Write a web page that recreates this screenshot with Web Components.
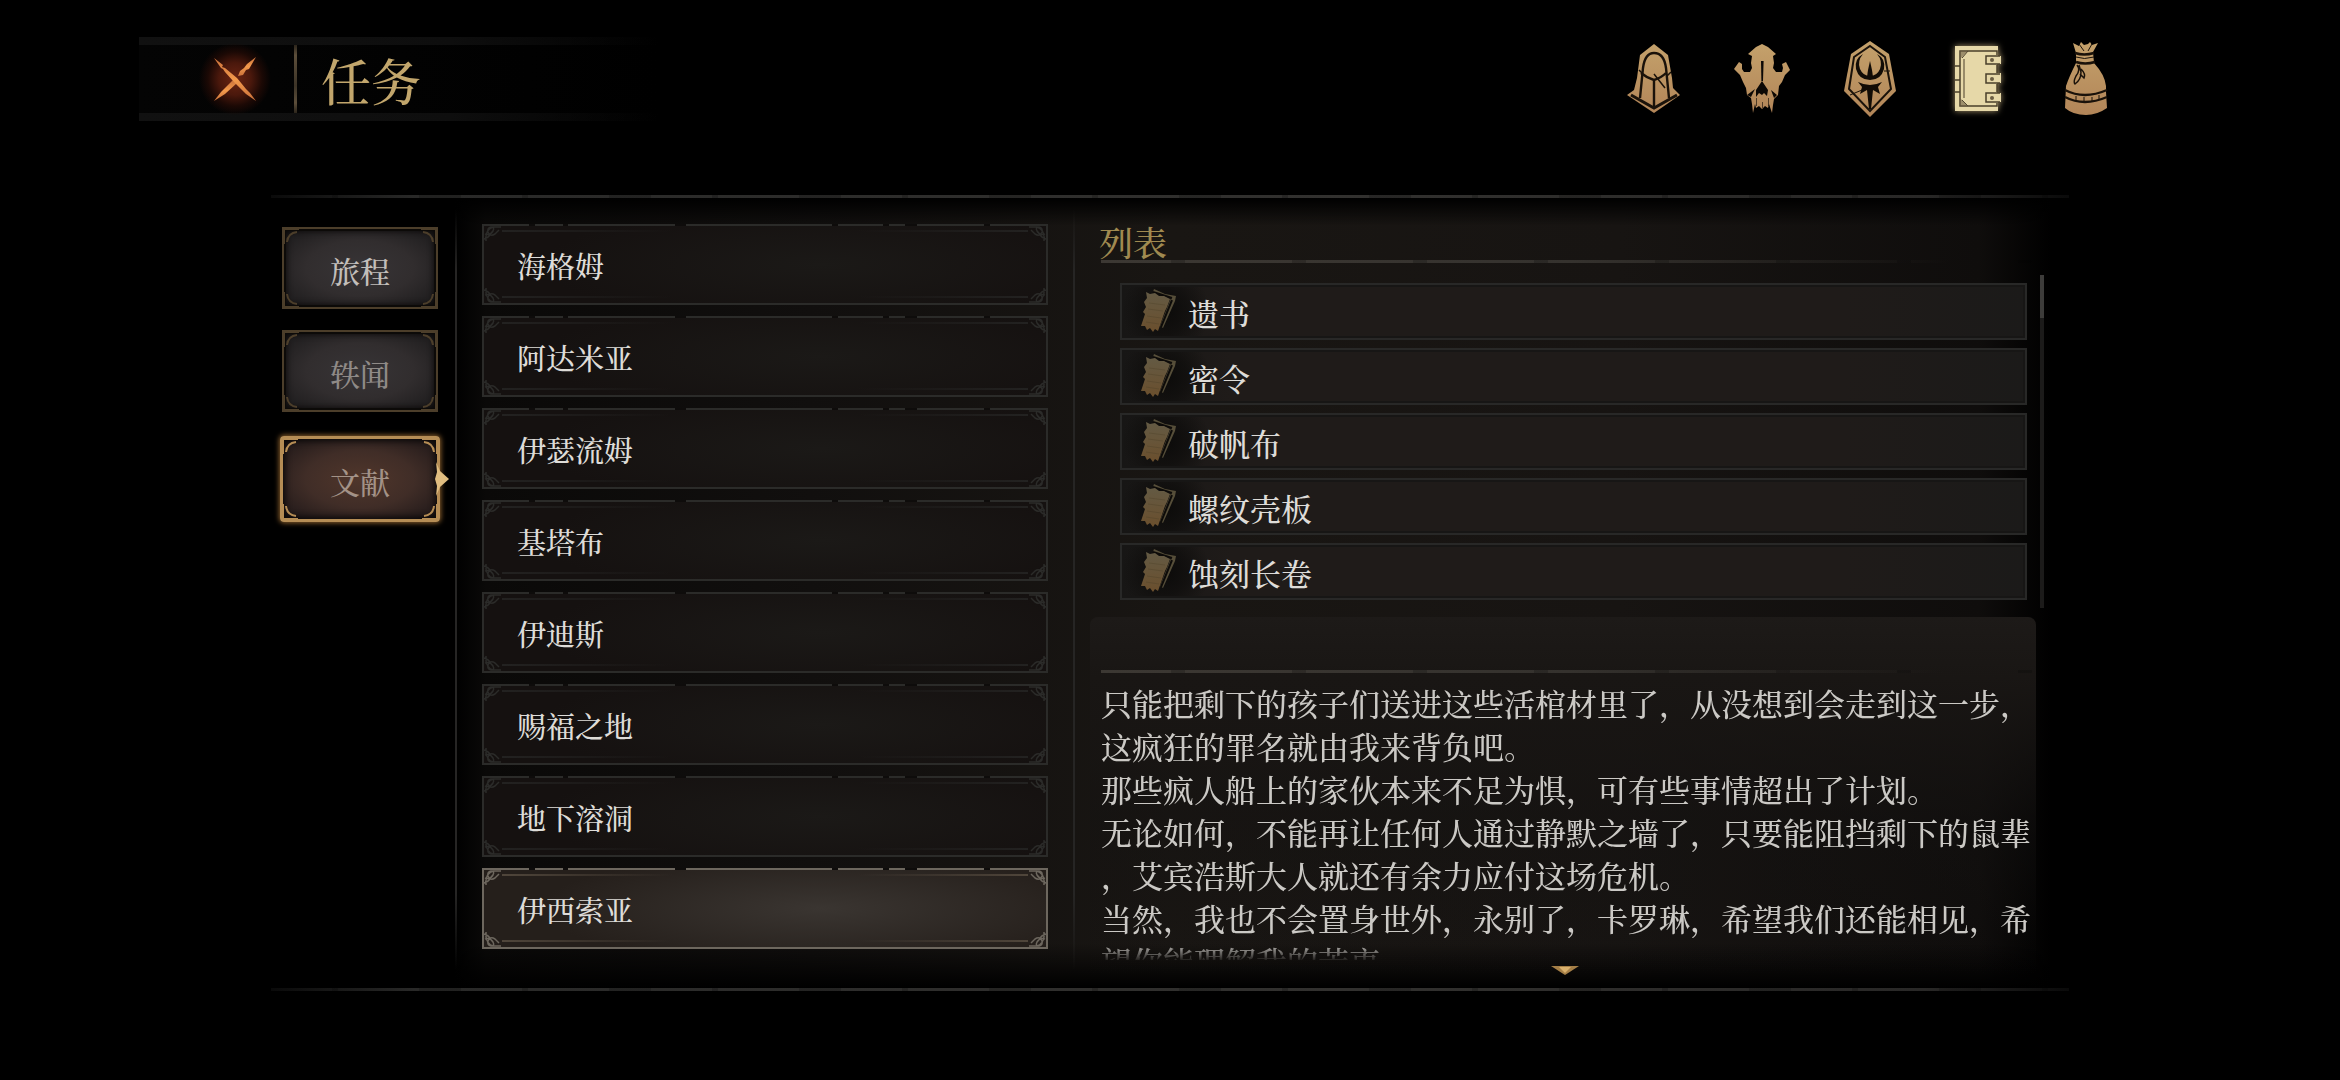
<!DOCTYPE html>
<html lang="zh-CN">
<head>
<meta charset="utf-8">
<meta name="viewport" content="width=device-width, initial-scale=1">
<title>任务</title>
<style>
  :root {
    --gold: #c2a66c;
    --text: #dedcd8;
  }
  * {box-sizing: border-box}
  body {
    margin: 0;
    min-height: 100vh;
    background: #000;
    color: var(--text);
    font-family: "Noto Serif CJK SC", "Noto Sans CJK SC", serif;
    font-weight: 500;
  }
</style>
</head>
<body>

<quest-header>
  <span slot="title">任务</span>
  <menu-icon slot="menu" name="hood" label="角色"></menu-icon>
  <menu-icon slot="menu" name="skull" label="怪物"></menu-icon>
  <menu-icon slot="menu" name="shield" label="技能"></menu-icon>
  <menu-icon slot="menu" name="book" label="任务"></menu-icon>
  <menu-icon slot="menu" name="bag" label="背包"></menu-icon>
</quest-header>

<quest-panel>
  <side-tab slot="tabs" class="lit">旅程</side-tab>
  <side-tab slot="tabs">轶闻</side-tab>
  <side-tab slot="tabs" active>文献</side-tab>

  <region-item slot="regions">海格姆</region-item>
  <region-item slot="regions">阿达米亚</region-item>
  <region-item slot="regions">伊瑟流姆</region-item>
  <region-item slot="regions">基塔布</region-item>
  <region-item slot="regions">伊迪斯</region-item>
  <region-item slot="regions">赐福之地</region-item>
  <region-item slot="regions">地下溶洞</region-item>
  <region-item slot="regions" active>伊西索亚</region-item>

  <doc-list slot="detail">
    <span slot="heading">列表</span>
    <doc-item>遗书</doc-item>
    <doc-item>密令</doc-item>
    <doc-item>破帆布</doc-item>
    <doc-item>螺纹壳板</doc-item>
    <doc-item>蚀刻长卷</doc-item>
  </doc-list>

  <doc-reader slot="detail">
    <p>只能把剩下的孩子们送进这些活棺材里了，从没想到会走到这一步，这疯狂的罪名就由我来背负吧。</p>
    <p>那些疯人船上的家伙本来不足为惧，可有些事情超出了计划。</p>
    <p>无论如何，不能再让任何人通过静默之墙了，只要能阻挡剩下的鼠辈，艾宾浩斯大人就还有余力应付这场危机。</p>
    <p>当然，我也不会置身世外，永别了，卡罗琳，希望我们还能相见，希望你能理解我的苦衷</p>
  </doc-reader>
</quest-panel>

<script>
// shared bits for every shadow root
const base = `
  * {box-sizing: border-box}
  svg {display: block}
  button {
    margin: 0;
    padding: 0;
    border: 0;
    background: none;
    color: inherit;
    font: inherit;
    cursor: pointer;
  }
`;

const icons = {
  hood: `<svg width="54" height="70" viewBox="0 0 54 70">
    <path fill="url(#g)" d="M27 0L41 11L45 34L46 44L53 51L27 69L0 51L7 46L10 34L13 11Z"/>
    <g fill="none" stroke="#1a120a" stroke-width="2.4">
      <path d="M13 54L16 24Q18 9 27 9Q37 9 39 24L42 54"/>
      <path d="M14 29Q20 34 27 36Q34 34 39 29M27 36V64"/>
      <path stroke-width="3" d="M4 51L27 64L50 51"/>
      <path stroke-width="1.5" d="M27 30L38 44M12 26l3 3M44 28l-4 4"/>
    </g></svg>`,
  skull: `<svg width="56" height="70" viewBox="0 0 56 70">
    <path fill="url(#g)" d="M28 0L34 3L42 10L39 12L40 19L39 24L42 28L48 28L49 24L48 20L52 18L56 26L51 31L48 38L45 42L44 51L40 55L39 61L38 69L35 60L34 64L31 62L28 65L25 62L22 64L21 60L19 69L18 60L17 54L13 51L12 44L9 38L6 31L0 25L5 18L8 20L8 25L10 28L16 28L18 24L17 19L18 12L14 10L22 3Z"/>
    <g fill="#0c0805">
      <path d="M27 17h2.600l-.6 20h-1.600z"/>
      <path d="M28 37L34 46L33 52L30 49L28 51L25 49L22 53L22 46Z"/>
      <path d="M13 51l8-6-4 8zM43 51l-6-5 3 8z"/>
      <path d="M22 54h1v8h-1zM34 54h1v8h-1zM28 58h1v6h-1z" opacity=".6"/>
    </g></svg>`,
  shield: `<svg width="52" height="76" viewBox="0 0 52 76">
    <path fill="url(#g)" d="M26 0L45 13L52 50L26 76L0 50L7 13Z"/>
    <path fill="none" stroke="#1a120a" stroke-width="2" d="M26 5L41 16L47 48L26 70L5 48L10 16Z"/>
    <g fill="#120c06">
      <path d="M19 13Q10 18 12 28Q15 39 26 39Q37 39 40 28Q42 18 33 13Q39 20 36 28Q33 35 26 35Q19 35 16 28Q13 20 19 13Z"/>
      <path d="M26 20L28 29L29 36H23L24 29Z"/>
      <path d="M14 41Q20 44 26 44Q32 44 38 41L34 46L36 53L29 49L27 68H25L23 49L16 53L18 46Z"/>
    </g>
    <path fill="none" stroke="#1a120a" d="M6 54L18 49M40 30l6 0"/></svg>`,
  book: `<svg width="46" height="66" viewBox="0 0 46 66">
    <path fill="#e6d8a8" d="M0 0H43V10H46V18H42V27H46V37H42V47H46V56H43V65H0Z"/>
    <g fill="none" stroke="#4a3f2a" stroke-width="1.500">
      <path d="M42 9V5H5V60H42V57M42 19V27M42 38V46"/>
      <path d="M7 12L13 5M7 54L13 60M9 13V52"  stroke-width="1"/>
      <path d="M0 20H5M0 34H5M0 46H5"/>
      <path d="M45 10H31V18H45M45 28H31V37H45M45 47H31V56H45"/>
    </g>
    <g fill="#6a5d42"><circle cx="37" cy="14" r="2"/><circle cx="37" cy="33" r="2"/><circle cx="37" cy="52" r="2"/><path d="M5 5h8l-8 8zM5 60h8l-8-8z" opacity=".6"/></g></svg>`,
  bag: `<svg width="44" height="74" viewBox="0 0 44 74">
    <path fill="url(#g)" d="M9 1L15 4L17 0L20 3L24 2L26 0L28 3L34 1L29 10L30 21Q41 33 42 44V50L43 66Q33 73 22 73Q9 73 1 66L2 44Q5 35 12 21V11Z"/>
    <g fill="none" stroke="#1a120a">
      <path stroke-width="2.400" d="M11 11Q20 14 30 11M12 20Q21 23 31 20"/>
      <path d="M12 15Q20 18 30 15M15 2l5 7M28 2l-4 7"/>
      <path stroke-width="2.400" d="M1 48Q20 58 43 48M1 55Q20 65 43 55"/>
      <path stroke-width="1.500" d="M13 23Q17 28 12 34Q9 40 11 42Q17 38 17 30L15 23M17 27Q22 32 20 36L16 32"/>
      <path d="M12 54v4M20 55v4M28 55v4M35 53v4"/>
    </g></svg>`
};

window.customElements.define('menu-icon', class extends HTMLElement {
  constructor(){
    super();
    const shadow = this.attachShadow({mode: 'open'});
    const name = this.getAttribute('name');
    shadow.innerHTML=`
    <style>
      ${base}
      :host {display: block}
      button {
        display: grid;
        place-items: center;
        width: 60px;
        height: 76px;
      }
      /* the page we are on glows */
      .book {filter: drop-shadow(0 0 3px #a8956c)}
      .defs {position: absolute}
    </style>
    <svg class="defs" width="0" height="0" aria-hidden="true">
      <linearGradient id="g" x1="0" y1="0" x2="0" y2="1">
        <stop offset="0" stop-color="#c4a16b"/>
        <stop offset="1" stop-color="#b28558"/>
      </linearGradient>
    </svg>
    <button class="${name}" aria-label="${this.getAttribute('label')}">${icons[name]}</button>
    `;
  }
});

window.customElements.define('quest-header', class extends HTMLElement {
  constructor(){
    super();
    const shadow = this.attachShadow({mode: 'open'});
    shadow.innerHTML=`
    <style>
      ${base}
      :host {
        display: flex;
        justify-content: space-between;
        align-items: center;
        padding: 37px 224px 0 139px;
      }
      .bar {
        display: flex;
        align-items: center;
        width: 520px;
        height: 84px;
        padding-left: 60px;
        background:
          linear-gradient(to right, #111 0, #0e0e0e 60%, transparent) top / 100% 8px no-repeat,
          linear-gradient(to right, #111 0, #0e0e0e 60%, transparent) bottom / 100% 8px no-repeat,
          linear-gradient(to right, #040404, transparent);
      }
      .close {
        display: grid;
        place-items: center;
        width: 72px;
        height: 72px;
        background: radial-gradient(closest-side, #6a2412 0, #4a180c 45%, #1c0905 75%, transparent);
      }
      .divider {
        width: 3px;
        height: 68px;
        margin: 0 24px 0 23px;
        background: linear-gradient(#2c251b, #5c4e3a 15%, #3d3427 60%, #5c4e3a 85%, #2c251b);
      }
      h1 {
        margin: 0;
        color: var(--gold);
        font-size: 50px;
        line-height: 60px;
        font-weight: 500;
      }
      nav {
        display: flex;
        gap: 48px;
      }
    </style>
    <div class="bar">
      <button class="close" aria-label="关闭">
        <svg width="44" height="46" viewBox="0 0 44 46">
          <defs><linearGradient id="fire" x1="0" y1="0" x2="0" y2="1">
            <stop offset="0" stop-color="#c9703a"/><stop offset=".5" stop-color="#f39a4c"/><stop offset="1" stop-color="#c9703a"/>
          </linearGradient></defs>
          <g fill="url(#fire)">
            <path d="M43 1L36 13L33 14L30 19L25 20L27 15L31 12L34 8Z"/>
            <path d="M20 24L24 27L12 38L1 45L8 36Z"/>
            <path d="M1 2L10 9L9 11L12 12L24 22L33 33L37 37L43 45L33 38L21 26L12 16L10 13L8 12Z"/>
          </g>
        </svg>
      </button>
      <div class="divider"></div>
      <h1><slot name="title"></slot></h1>
    </div>
    <nav><slot name="menu"></slot></nav>
    `;
  }
});

window.customElements.define('quest-panel', class extends HTMLElement {
  constructor(){
    super();
    const shadow = this.attachShadow({mode: 'open'});
    shadow.innerHTML=`
    <style>
      ${base}
      :host {
        display: block;
        padding: 74px 271px 0;
      }
      .edge {
        height: 3px;
        background:
          repeating-linear-gradient(to right, transparent 0 61px, #0003 61px 67px, transparent 67px 148px, #0003 148px 190px),
          linear-gradient(to right, #0a0a0a, #292928 8%, #32312f 60%, #292827 92%, #0a0a0a);
      }
      .panel {
        display: grid;
        grid-template-columns: 184px minmax(0, 618fr) minmax(0, 996fr);
        min-height: 790px;
        background:
          linear-gradient(#000 0, transparent 28px, transparent calc(100% - 45px), #000),
          linear-gradient(to right, transparent 184px, #0a0908 215px, #110f0e 30%, #191613 50%, #171412 75%, #0f0d0c 95%, transparent 99%);
      }
      .tabs {
        display: flex;
        flex-direction: column;
        gap: 21px;
        padding: 29px 17px 0 11px;
      }
      .regions, .detail {
        background: linear-gradient(transparent, #262524 8%, #262524 90%, transparent) left 0 top 12px / 2px calc(100% - 30px) no-repeat;
      }
      .regions {
        display: flex;
        flex-direction: column;
        gap: 11px;
        padding: 26px 25px 38px 27px;
      }
      .detail {padding: 27px 25px 0 17px}
    </style>
    <div class="edge"></div>
    <main class="panel">
      <nav class="tabs"><slot name="tabs"></slot></nav>
      <section class="regions"><slot name="regions"></slot></section>
      <section class="detail"><slot name="detail"></slot></section>
    </main>
    <div class="edge"></div>
    `;
  }
});

window.customElements.define('side-tab', class extends HTMLElement {
  constructor(){
    super();
    const shadow = this.attachShadow({mode: 'open'});
    const corner = `<svg width="16" height="16" viewBox="0 0 16 16"><path fill="none" stroke="currentColor" stroke-width="2" d="M1 16V1H16M4 14Q5 5 14 4"/></svg>`;
    shadow.innerHTML=`
    <style>
      ${base}
      :host {
        display: block;
        --frame: #4c3e2a;
        color: #8f8a87;
      }
      :host(.lit) {color: #c2beba}
      :host([active]) {
        --frame: #b58d55;
        margin: 3px -2px 0;
        color: #a39287;
      }
      button {
        position: relative;
        width: 100%;
        height: 82px;
        padding-top: 4px;
        border: 2px solid var(--frame);
        background: radial-gradient(ellipse at center, #373436 0, #312d2e 50%, #211f20 85%, #100e0e);
        box-shadow: inset 0 0 0 2px #0c0a08, inset 0 0 6px 2px #0a0808;
        font-size: 30px;
        line-height: 40px;
      }
      :host([active]) button {
        height: 86px;
        border-width: 3px;
        border-radius: 4px;
        background: radial-gradient(ellipse at center, #50362b 0, #402d27 50%, #271d1c 85%, #120c0b);
        box-shadow: 0 0 5px 1px #8a5f2c, inset 0 0 6px 2px #0a0808;
      }
      .corner {
        position: absolute;
        color: var(--frame);
      }
      .tl {top: -1px; left: -1px}
      .tr {top: -1px; right: -1px; transform: scaleX(-1)}
      .bl {bottom: -1px; left: -1px; transform: scaleY(-1)}
      .br {bottom: -1px; right: -1px; transform: scale(-1)}
      .pointer {
        display: none;
        position: absolute;
        top: 23px;
        right: -12px;
      }
      :host([active]) .pointer {display: block}
    </style>
    <button>
      <span class="corner tl">${corner}</span><span class="corner tr">${corner}</span>
      <span class="corner bl">${corner}</span><span class="corner br">${corner}</span>
      <slot></slot>
      <svg class="pointer" width="15" height="34" viewBox="0 0 15 34"><path fill="#e0bd80" d="M2 0L6 9L15 17L6 25L2 34L3 24L1 17L3 10Z"/></svg>
    </button>
    `;
  }
});

window.customElements.define('region-item', class extends HTMLElement {
  constructor(){
    super();
    const shadow = this.attachShadow({mode: 'open'});
    const knot = `<svg width="20" height="18" viewBox="0 0 20 18"><path fill="none" stroke="currentColor" stroke-width="1.500" d="M4 17V12Q5 5 11 3H19M3 10Q8 12 11 7Q13 3 9 3Q5 4 6 8Q8 13 13 10L17 6M2 15Q6 14 8 11"/></svg>`;
    shadow.innerHTML=`
    <style>
      ${base}
      :host {
        display: block;
        --frame: #2b2b29;
        --thin: #232221;
        --bg: #151110;
        --glow: #1b1917;
      }
      :host([active]) {
        --frame: #6d675e;
        --thin: #50463b;
        --bg: #251f1b;
        --glow: #3a3531;
      }
      button {
        position: relative;
        display: block;
        width: 100%;
        height: 81px;
        padding: 3px 33px 0;
        border: 2px solid var(--frame);
        /* short inner strokes next to each corner, then the dark stone fill */
        background:
          linear-gradient(to right, var(--thin), transparent) 18px 4px / 170px 2px no-repeat,
          linear-gradient(to left, var(--thin), transparent) calc(100% - 18px) 4px / 170px 2px no-repeat,
          linear-gradient(to right, var(--thin), transparent) 18px 70px / 170px 2px no-repeat,
          linear-gradient(to left, var(--thin), transparent) calc(100% - 18px) 70px / 170px 2px no-repeat,
          radial-gradient(ellipse 50% 75% at 60% 50%, var(--glow), var(--bg));
        font-size: 29px;
        line-height: 40px;
        text-align: left;
      }
      /* worn gaps in the top edge */
      button::before {
        content: "";
        position: absolute;
        top: -2px;
        left: 0;
        right: 0;
        height: 2px;
        background: linear-gradient(to right, transparent 8%, #0e0c0b 8% 9%, transparent 9% 14%, #0e0c0b 14% 15%, transparent 15% 34%, #0e0c0b 34% 36%, transparent 36% 62%, #0e0c0b 62% 63%, transparent 63% 71%, #0e0c0b 71% 72%, transparent 72% 75%, #0e0c0b 75% 77%, transparent 77% 89%, #0e0c0b 89% 90%, transparent 90%);
      }
      .knot {
        position: absolute;
        color: var(--frame);
      }
      .tl {top: -2px; left: -2px}
      .tr {top: -2px; right: -2px; transform: scaleX(-1)}
      .bl {bottom: -2px; left: -2px; transform: scaleY(-1)}
      .br {bottom: -2px; right: -2px; transform: scale(-1)}
    </style>
    <button>
      <span class="knot tl">${knot}</span><span class="knot tr">${knot}</span>
      <span class="knot bl">${knot}</span><span class="knot br">${knot}</span>
      <slot></slot>
    </button>
    `;
  }
});

window.customElements.define('rule-line', class extends HTMLElement {
  constructor(){
    super();
    const shadow = this.attachShadow({mode: 'open'});
    shadow.innerHTML=`
    <style>
      :host {
        display: block;
        height: 3px;
        background:
          repeating-linear-gradient(to right, transparent 0 70px, #0003 70px 84px, transparent 84px 121px),
          linear-gradient(to right, #3c3833, #35322e 50%, transparent 90%);
      }
    </style>
    `;
  }
});

window.customElements.define('doc-list', class extends HTMLElement {
  constructor(){
    super();
    const shadow = this.attachShadow({mode: 'open'});
    shadow.innerHTML=`
    <style>
      ${base}
      :host {display: block}
      h2 {
        margin: 0 0 1px;
        padding-left: 9px;
        color: #a08a50;
        font-size: 34px;
        line-height: 34px;
        font-weight: 500;
      }
      rule-line {margin-left: 11px}
      .scroll {
        display: grid;
        grid-template-columns: minmax(0, 1fr) 4px;
        gap: 13px;
        margin: 12px 0 0 30px;
      }
      .items {
        display: flex;
        flex-direction: column;
        gap: 8px;
        padding: 8px 0;
      }
      .track {background: #1c1b1a}
      .thumb {
        height: 43px;
        background: #3d3c3a;
      }
    </style>
    <h2><slot name="heading"></slot></h2>
    <rule-line></rule-line>
    <div class="scroll">
      <div class="items"><slot></slot></div>
      <div class="track"><div class="thumb"></div></div>
    </div>
    `;
  }
});

window.customElements.define('doc-item', class extends HTMLElement {
  constructor(){
    super();
    const shadow = this.attachShadow({mode: 'open'});
    shadow.innerHTML=`
    <style>
      ${base}
      :host {display: block}
      button {
        display: flex;
        align-items: center;
        gap: 12px;
        width: 100%;
        height: 57px;
        padding: 3px 0 0 18px;
        border: 2px solid #282827;
        background:
          radial-gradient(circle at 44px 50%, #0c0b0a 0, #0c0b0a99 22px, transparent 44px),
          linear-gradient(to right, #171615, #1f1b19 12%, #1f1b19 80%, #1b1a19);
        box-shadow: inset 0 0 0 2px #171615;
        font-size: 31px;
        line-height: 40px;
      }
      svg {
        flex: none;
        margin-bottom: 4px;
      }
    </style>
    <button>
      <svg width="36" height="44" viewBox="0 0 36 44">
        <defs><linearGradient id="paper" x1="0" y1="0" x2="0" y2="1">
          <stop offset="0" stop-color="#635a44"/><stop offset="1" stop-color="#6b4f2d"/>
        </linearGradient></defs>
        <path fill="#564e39" d="M14 0L25 5L36 7L35 12L23 39L20 37L31 9L13 3Z"/>
        <path fill="none" stroke="#0d0b09" stroke-width="2" d="M32 11L21 38M13 3L32 9"/>
        <path fill="url(#paper)" d="M6 3L10 5L15 4L19 7L24 7L30 10L27 18L25 22L18 42L15 40L13 43L10 39L7 41L5 37L1 37L5 25L3 23L6 18L4 13L7 9Z"/>
        <path fill="none" stroke="#4d4029" d="M9 14L25 16M8 20L23 22M7 27L21 29M6 33L19 35" opacity=".4"/>
      </svg>
      <span><slot></slot></span>
    </button>
    `;
  }
});

window.customElements.define('doc-reader', class extends HTMLElement {
  constructor(){
    super();
    const shadow = this.attachShadow({mode: 'open'});
    shadow.innerHTML=`
    <style>
      ${base}
      :host {
        display: block;
        margin: 9px 8px 0 0;
        padding: 53px 0 0 11px;
        border-radius: 8px 8px 0 0;
        background: linear-gradient(#1d1a18, #191614 60px, #14121180 200px, transparent);
      }
      .text {
        height: 279px;
        margin-top: 8px;
        overflow: hidden;
        color: #cbc9c5;
        font-size: 31px;
        line-height: 43px;
        line-break: anywhere;
        -webkit-mask-image: linear-gradient(#000 262px, transparent 281px);
        mask-image: linear-gradient(#000 262px, transparent 281px);
      }
      ::slotted(p) {margin: 0}
      .more {
        display: block;
        margin: 6px auto 0;
        padding-right: 8px;
      }
    </style>
    <rule-line></rule-line>
    <div class="text"><slot></slot></div>
    <button class="more" aria-label="向下滚动">
      <svg width="28" height="9" viewBox="0 0 28 9"><path fill="#a57f47" d="M0 0H28L14 9Z"/><path fill="#d9b06c" d="M8 1H20L14 7Z"/></svg>
    </button>
    `;
  }
});
</script>
</body>
</html>
